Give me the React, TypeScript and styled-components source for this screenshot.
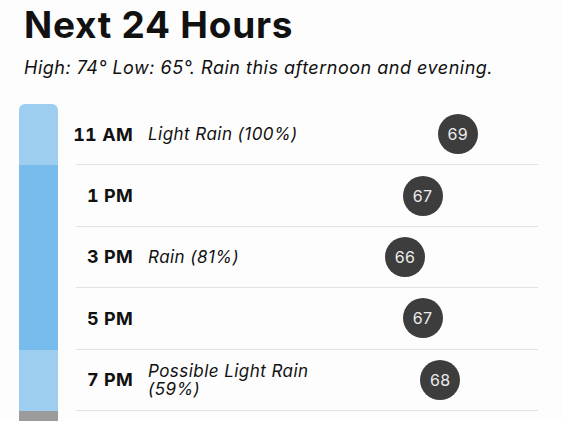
import * as React from 'react';
import styled, { createGlobalStyle } from 'styled-components';

const GlobalStyle = createGlobalStyle`
  html, body {
    margin: 0;
    padding: 0;
    background: #fdfdfd;
    font-family: Inter, 'Noto Sans', sans-serif;
    color: #111;
    overflow: hidden;
  }
`;

type Shade = 'light' | 'rain' | 'dry';

type Hour = {
  time: string;
  summary?: string;
  temp: number;
  shade: Shade;
};

const hours: Hour[] = [
  { time: '11 AM', summary: 'Light Rain (100%)', temp: 69, shade: 'light' },
  { time: '1 PM', temp: 67, shade: 'rain' },
  { time: '3 PM', summary: 'Rain (81%)', temp: 66, shade: 'rain' },
  { time: '5 PM', temp: 67, shade: 'rain' },
  { time: '7 PM', summary: 'Possible Light Rain (59%)', temp: 68, shade: 'light' },
];

const shades: Record<Shade, string> = {
  light: '#9dcdef',
  rain: '#77bcec',
  dry: '#9b9b9b',
};

// horizontal place of a temperature dot, px from the row body's left edge
const LOW_TEMP = 66;
const LOW_LEFT = 309;
const PX_PER_DEGREE = 17.6;
const dotLeft = (temp: number) => LOW_LEFT + (temp - LOW_TEMP) * PX_PER_DEGREE;

const Page = styled.main`
  width: 562px;
`;

const Header = styled.header`
  padding: 3px 23px 0 24px;
`;

const Title = styled.h1`
  margin: 0;
  font-size: 37px;
  line-height: 44px;
  font-weight: 700;
  letter-spacing: 0.75px;
`;

const Summary = styled.p`
  margin: 10px 0 0;
  font-size: 18px;
  line-height: 22px;
  font-style: italic;
  letter-spacing: 0.5px;
`;

const Timeline = styled.ol`
  list-style: none;
  margin: 25px 0 0;
  padding: 0 24px 0 19px;
`;

const Row = styled.li`
  display: grid;
  grid-template-columns: 39px 1fr;
  column-gap: 18px;
  height: 61.4px;
`;

const BarSegment = styled.div<{ $shade: Shade; $first?: boolean }>`
  background: ${(p) => shades[p.$shade]};
  border-radius: ${(p) => (p.$first ? '6px 6px 0 0' : '0')};
`;

const RowBody = styled.div`
  position: relative;
  display: flex;
  align-items: center;
  border-bottom: 1px solid #e2e2e2;
`;

// right-aligned; a long label spills to the left, not onto the summary
const Time = styled.span`
  flex: 0 0 57px;
  min-width: 0;
  display: flex;
  justify-content: flex-end;
  white-space: nowrap;
  font-size: 18px;
  font-weight: 700;
  letter-spacing: 0.3px;
  font-variant-numeric: tabular-nums;
`;

const Condition = styled.span`
  margin-left: 15px;
  width: 185px;
  font-size: 17px;
  line-height: 18px;
  font-style: italic;
  letter-spacing: 0.45px;
`;

const TempDot = styled.span`
  position: absolute;
  top: 50%;
  width: 40px;
  height: 40px;
  margin-top: -20px;
  border-radius: 50%;
  background: #3d3d3d;
  color: #ececec;
  font-size: 16px;
  letter-spacing: 0.3px;
  display: flex;
  align-items: center;
  justify-content: center;
`;

export default function App() {
  return (
    <Page>
      <GlobalStyle />
      <Header>
        <Title>Next 24 Hours</Title>
        <Summary>High: 74° Low: 65°. Rain this afternoon and evening.</Summary>
      </Header>
      <Timeline>
        {hours.map((h, i) => (
          <Row key={h.time}>
            <BarSegment $shade={h.shade} $first={i === 0} />
            <RowBody>
              <Time>{h.time}</Time>
              {h.summary && <Condition>{h.summary}</Condition>}
              <TempDot style={{ left: dotLeft(h.temp) }}>{h.temp}</TempDot>
            </RowBody>
          </Row>
        ))}
        <Row>
          <BarSegment $shade="dry" />
          <div />
        </Row>
      </Timeline>
    </Page>
  );
}
